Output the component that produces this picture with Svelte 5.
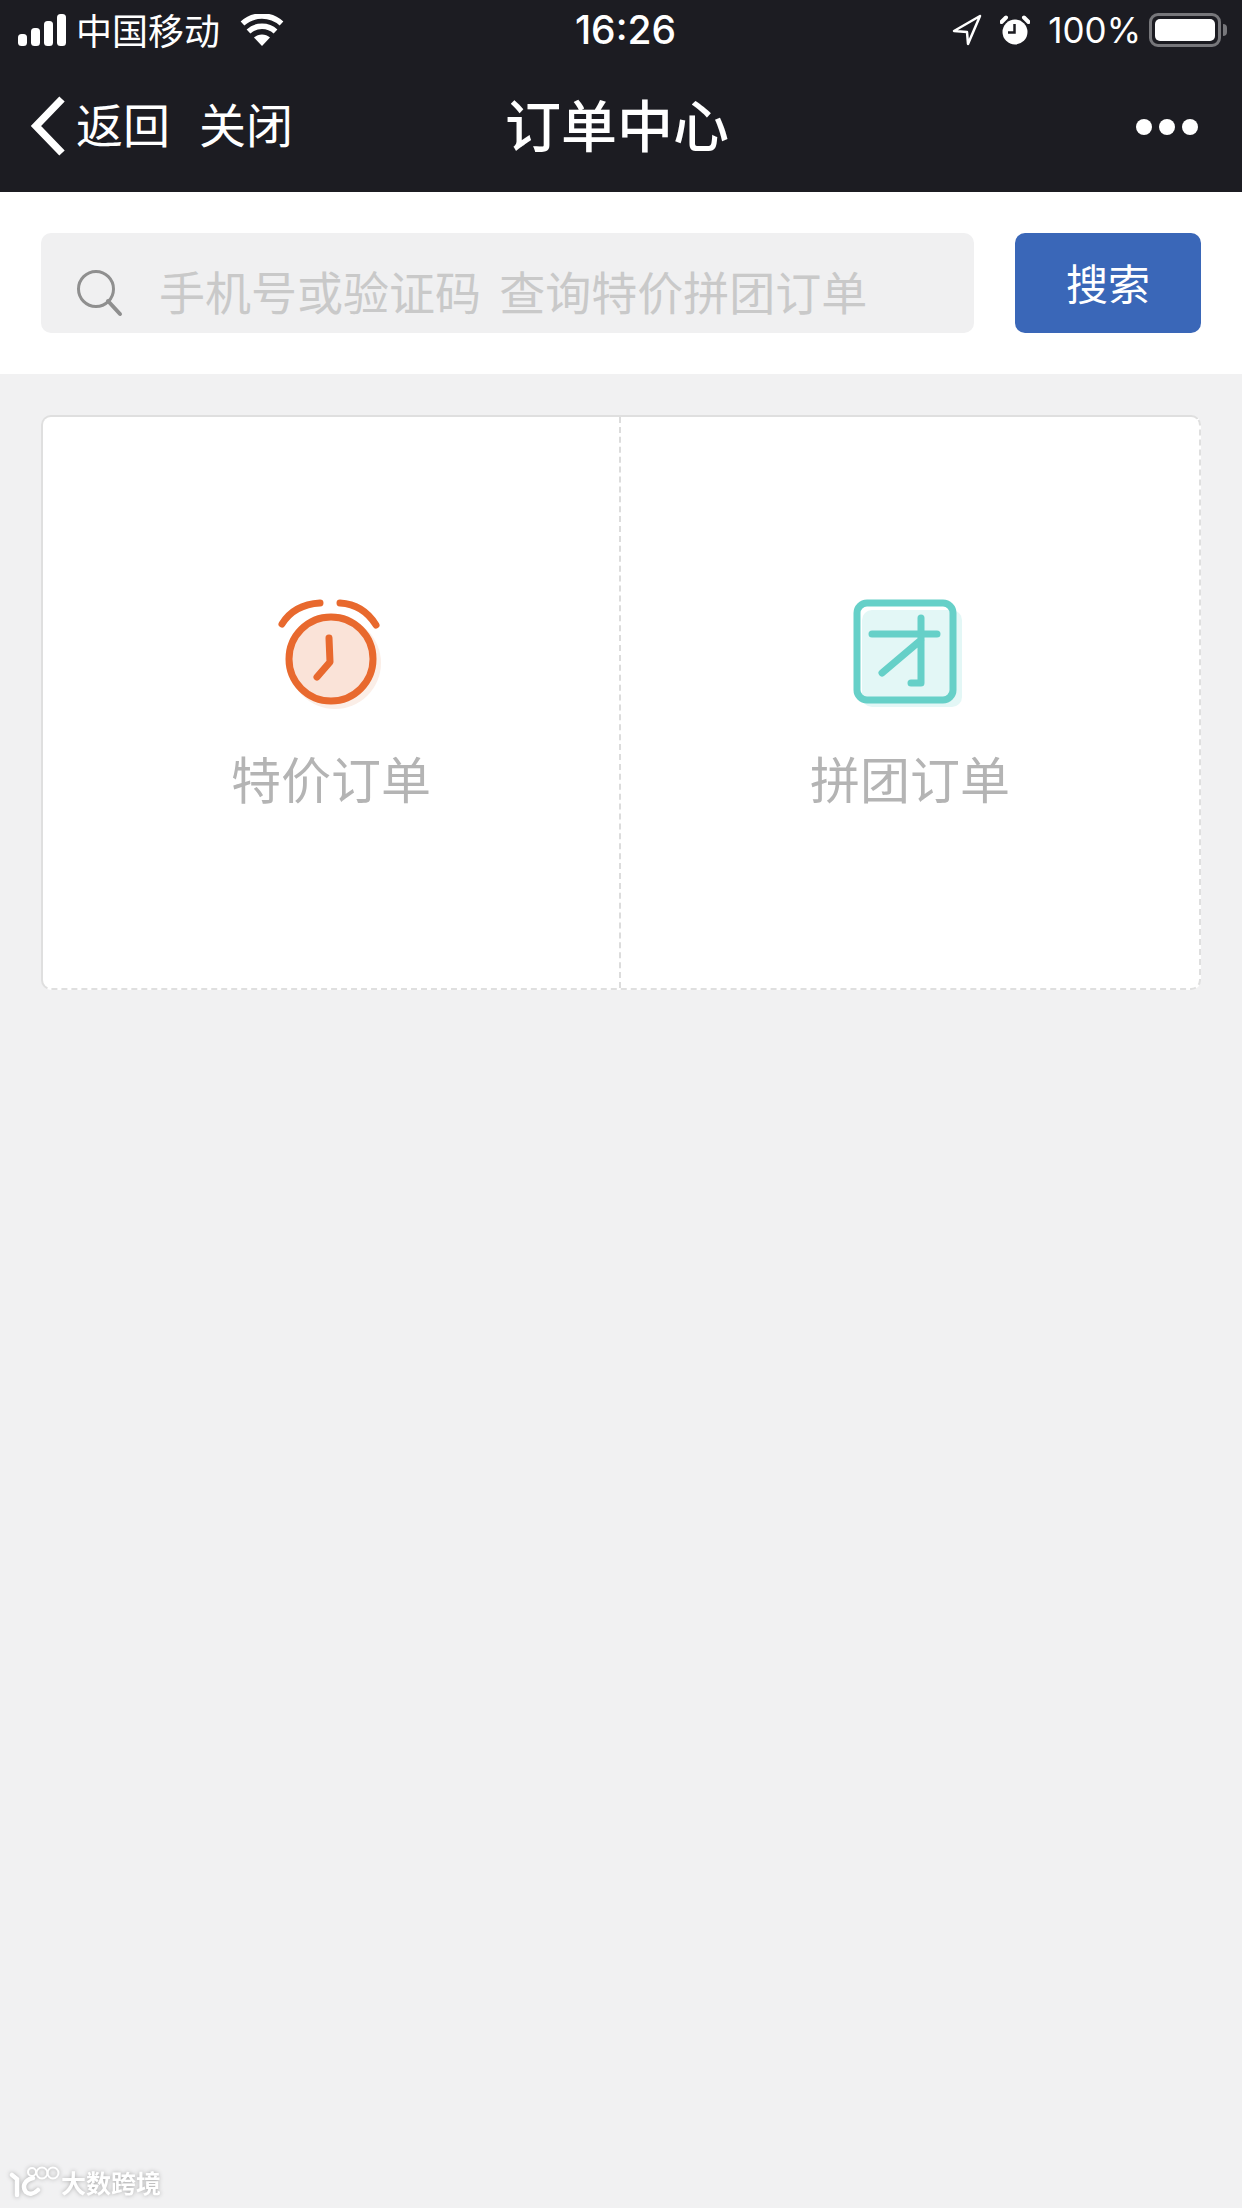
<script>
  const orders = [
    { label: '特价订单', kind: 'clock' },
    { label: '拼团订单', kind: 'group' }
  ];
</script>

<div class="page">
  <header class="top">
    <div class="status">
      <div class="st-left">
        <svg class="signal" width="50" height="32" viewBox="0 0 50 32"><rect x="0" y="20" width="9" height="12" rx="3.5"/><rect x="13" y="14" width="9" height="18" rx="3.5"/><rect x="26" y="7" width="9" height="25" rx="3.5"/><rect x="39" y="0" width="9" height="32" rx="3.5"/></svg>
        <span class="carrier">中国移动</span>
        <svg class="wifi" width="44" height="32" viewBox="0 0 44 32"><path d="M22 32 14 23.500C18.500 19.500 25.500 19.500 30 23.500Z" fill="#fff"/><path d="M8.500 17.500C16 10.500 28 10.500 35.500 17.500M2.500 9.500C13.500 -.5 30.500 -.5 41.500 9.500" fill="none" stroke="#fff" stroke-width="5.500"/></svg>
      </div>
      <div class="time">16:26</div>
      <div class="st-right">
        <svg class="loc" width="30" height="32" viewBox="0 0 30 32"><path d="M28 2 2 17 15 18 16 30Z" fill="none" stroke="#fff" stroke-width="2.500" stroke-linejoin="round"/></svg>
        <svg class="alarm" width="30" height="32" viewBox="0 0 30 32"><circle cx="15" cy="18" r="12.500" fill="#fff"/><path d="M1.500 8 6 3.500M28.500 8 24 3.500" stroke="#fff" stroke-width="4" stroke-linecap="round"/><path d="M14.500 10V18.500H8" fill="none" stroke="#1c1c22" stroke-width="2.500"/></svg>
        <span class="pct">100%</span>
        <div class="battery"><div class="fill"></div></div>
        <div class="nub"></div>
      </div>
    </div>
    <nav class="nav">
      <div class="nav-left">
        <svg class="back" width="36" height="60" viewBox="0 0 36 60"><path d="M32 3 6 30 32 57" fill="none" stroke="#fff" stroke-width="7.500"/></svg>
        <span>返回</span>
        <span class="close">关闭</span>
      </div>
      <h1>订单中心</h1>
      <div class="more"><i></i><i></i><i></i></div>
    </nav>
  </header>

  <section class="search">
    <div class="field">
      <svg class="glass" width="48" height="50" viewBox="0 0 48 50"><circle cx="21" cy="21" r="17.500" fill="none" stroke="#8f8f8f" stroke-width="3"/><path d="M33 33 45 46" stroke="#8f8f8f" stroke-width="4" stroke-linecap="round"/></svg>
      <span class="ph">手机号或验证码 查询特价拼团订单</span>
    </div>
    <button class="btn">搜索</button>
  </section>

  <main class="body">
    <div class="card">
      {#each orders as o}
        <div class="cell">
          {#if o.kind === 'clock'}
            <svg class="icon" width="116" height="116" viewBox="0 0 116 116">
              <circle cx="62" cy="66" r="46" fill="#fbeee7"/>
              <circle cx="58" cy="62" r="42" fill="#fae3d8" stroke="#e8692e" stroke-width="7"/>
              <path d="M9 27C17 14 30 7 47 6M67 6C84 7 95 15 103 28" fill="none" stroke="#e8692e" stroke-width="7" stroke-linecap="round"/>
              <path d="M56 41 57 65 44 80" fill="none" stroke="#e8692e" stroke-width="7" stroke-linecap="round" stroke-linejoin="round"/>
            </svg>
          {:else}
            <svg class="icon" width="116" height="116" viewBox="0 0 116 116">
              <rect x="10" y="13" width="100" height="97" rx="10" fill="#e3f7f6"/>
              <rect x="5" y="6" width="96" height="97" rx="10" fill="none" stroke="#66d0c8" stroke-width="7"/>
              <path d="M20 37H85M69 21V86H59M69 43 30 76" fill="none" stroke="#66d0c8" stroke-width="7" stroke-linecap="round" stroke-linejoin="round"/>
            </svg>
          {/if}
          <div class="label">{o.label}</div>
        </div>
      {/each}
    </div>
  </main>

  <div class="mark">
    <svg width="52" height="34" viewBox="0 0 52 34"><path d="M3 10 8 14V30M24 13C15 15 13 22 17 27 20 30 25 29 29 25" fill="none" stroke="#fff" stroke-width="4.500" stroke-linecap="round"/><circle cx="23" cy="7" r="4" fill="none" stroke="#fff" stroke-width="2"/><circle cx="33" cy="8" r="5.500" fill="none" stroke="#fff" stroke-width="2"/><circle cx="44" cy="8" r="5.500" fill="none" stroke="#fff" stroke-width="2"/></svg>
    <span>大数跨境</span>
  </div>
</div>

<style>
  :global(body) {
    margin: 0;
    background: #f1f1f2;
  }
  .page {
    position: relative;
    width: 1242px;
    height: 2208px;
    overflow: hidden;
    background: #f1f1f2;
    font-family: "Noto Sans CJK SC", "Noto Sans", sans-serif;
  }
  .top {
    height: 192px;
    background: #1c1c22;
    color: #fff;
  }
  .status {
    height: 60px;
    display: grid;
    grid-template-columns: 1fr auto 1fr;
    align-items: center;
    padding: 0 15px 0 18px;
    box-sizing: border-box;
  }
  .st-left, .st-right {
    display: flex;
    align-items: center;
  }
  .st-right { justify-content: flex-end; }
  .signal { fill: #fff; }
  .carrier {
    font-size: 36px;
    line-height: 60px;
    margin-left: 8px;
    transform: translateY(-1px);
  }
  .wifi { margin-left: 20px; }
  .time {
    font-family: "Inter", "Liberation Sans", sans-serif;
    font-size: 39px;
    font-weight: 500;
    line-height: 60px;
    padding-left: 6px;
  }
  .alarm { margin-left: 18px; }
  .pct {
    font-family: "Inter", "Liberation Sans", sans-serif;
    font-size: 35px;
    line-height: 60px;
    margin-left: 18px;
  }
  .battery {
    width: 72px;
    height: 34px;
    margin-left: 8px;
    border: 3px solid #77777b;
    border-radius: 9px;
    padding: 3px;
    box-sizing: border-box;
  }
  .fill {
    height: 100%;
    background: #fff;
    border-radius: 5px;
  }
  .nub {
    width: 4px;
    height: 12px;
    margin-left: 2px;
    background: #77777b;
    border-radius: 0 4px 4px 0;
  }
  .nav {
    height: 132px;
    display: grid;
    grid-template-columns: 1fr auto 1fr;
    align-items: center;
    padding: 0 44px 6px 30px;
    box-sizing: border-box;
  }
  .nav-left {
    display: flex;
    align-items: center;
    font-size: 47px;
    line-height: 60px;
  }
  .back {
    margin-right: 10px;
    transform: translateY(3px);
  }
  .close { margin-left: 29px; }
  h1 {
    margin: 0;
    font-size: 56px;
    font-weight: 500;
    line-height: 70px;
    transform: translateX(3px);
  }
  .more {
    display: flex;
    justify-content: flex-end;
    gap: 7px;
    transform: translateY(4px);
  }
  .more i {
    width: 16px;
    height: 16px;
    border-radius: 50%;
    background: #fff;
  }
  .search {
    height: 182px;
    padding: 41px;
    box-sizing: border-box;
    background: #fff;
    display: flex;
    gap: 41px;
  }
  .field {
    flex: 1;
    height: 100px;
    background: #f0f0f1;
    border-radius: 10px;
    display: flex;
    align-items: center;
    padding-left: 34px;
    box-sizing: border-box;
  }
  .glass { margin-top: 20px; }
  .ph {
    margin-left: 36px;
    font-size: 46px;
    color: #c9c9c9;
    line-height: 100px;
    margin-top: 14px;
    white-space: nowrap;
    word-spacing: 8px;
  }
  .btn {
    width: 186px;
    height: 100px;
    border: 0;
    border-radius: 10px;
    background: #3a67b8;
    color: #fff;
    font-family: inherit;
    font-size: 42px;
    padding: 0 0 4px;
  }
  .body {
    padding: 41px;
  }
  .card {
    height: 575px;
    box-sizing: border-box;
    background: #fff;
    border: 2px solid #dfdfdf;
    border-right-style: dashed;
    border-bottom-style: dashed;
    border-radius: 10px;
    display: grid;
    grid-template-columns: 576px 1fr;
  }
  .cell {
    display: flex;
    flex-direction: column;
    align-items: center;
    padding-top: 180px;
    box-sizing: border-box;
  }
  .cell + .cell {
    border-left: 2px dashed #dcdcdc;
  }
  .icon { display: block; }
  .label {
    margin-top: 29px;
    font-size: 50px;
    line-height: 70px;
    color: #b4b4b4;
  }
  .mark {
    position: absolute;
    left: 9px;
    bottom: 8px;
    display: flex;
    align-items: center;
    color: #fff;
    font-size: 25px;
    font-weight: 700;
    filter: drop-shadow(0 0 2px #aaa);
  }
</style>
